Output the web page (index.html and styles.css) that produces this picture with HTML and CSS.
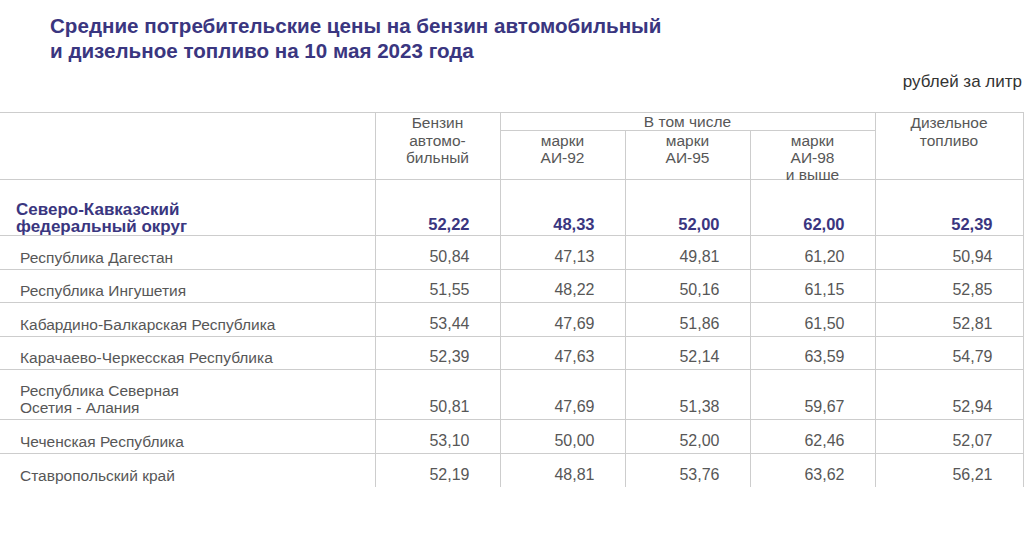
FILE: index.html
```html
<!DOCTYPE html>
<html lang="ru">
<head>
<meta charset="utf-8">
<link rel="stylesheet" href="styles.css">
</head>
<body>
<div class="page">
  <h1 class="title">Средние потребительские цены на бензин автомобильный<br>и дизельное топливо на 10 мая 2023 года</h1>
  <div class="unit">рублей за литр</div>
  <table class="prices">
    <colgroup>
      <col class="c-name"><col class="c-num"><col class="c-num"><col class="c-num"><col class="c-num"><col class="c-last">
    </colgroup>
    <thead>
      <tr class="h1">
        <th rowspan="2"></th>
        <th rowspan="2"><div class="hc">Бензин<br>автомо-<br>бильный</div></th>
        <th colspan="3" class="hsub"><div class="hs">В том числе</div></th>
        <th rowspan="2"><div class="hc">Дизельное<br>топливо</div></th>
      </tr>
      <tr class="h2">
        <th><div class="hc2">марки<br>АИ-92</div></th>
        <th><div class="hc2">марки<br>АИ-95</div></th>
        <th><div class="hc2">марки<br>АИ-98<br>и выше</div></th>
      </tr>
    </thead>
    <tbody>
      <tr class="total">
        <td class="name">Северо-Кавказский<br>федеральный округ</td>
        <td class="num">52,22</td><td class="num">48,33</td><td class="num">52,00</td><td class="num">62,00</td><td class="num">52,39</td>
      </tr>
      <tr class="row">
        <td class="name">Республика Дагестан</td>
        <td class="num">50,84</td><td class="num">47,13</td><td class="num">49,81</td><td class="num">61,20</td><td class="num">50,94</td>
      </tr>
      <tr class="row">
        <td class="name">Республика Ингушетия</td>
        <td class="num">51,55</td><td class="num">48,22</td><td class="num">50,16</td><td class="num">61,15</td><td class="num">52,85</td>
      </tr>
      <tr class="row">
        <td class="name">Кабардино-Балкарская Республика</td>
        <td class="num">53,44</td><td class="num">47,69</td><td class="num">51,86</td><td class="num">61,50</td><td class="num">52,81</td>
      </tr>
      <tr class="row">
        <td class="name">Карачаево-Черкесская Республика</td>
        <td class="num">52,39</td><td class="num">47,63</td><td class="num">52,14</td><td class="num">63,59</td><td class="num">54,79</td>
      </tr>
      <tr class="row tall">
        <td class="name">Республика Северная<br>Осетия - Алания</td>
        <td class="num">50,81</td><td class="num">47,69</td><td class="num">51,38</td><td class="num">59,67</td><td class="num">52,94</td>
      </tr>
      <tr class="row">
        <td class="name">Чеченская Республика</td>
        <td class="num">53,10</td><td class="num">50,00</td><td class="num">52,00</td><td class="num">62,46</td><td class="num">52,07</td>
      </tr>
      <tr class="row last">
        <td class="name">Ставропольский край</td>
        <td class="num">52,19</td><td class="num">48,81</td><td class="num">53,76</td><td class="num">63,62</td><td class="num">56,21</td>
      </tr>
    </tbody>
  </table>
</div>
</body>
</html>
```

FILE: styles.css
```css
html, body {
  margin: 0;
  padding: 0;
  background: #ffffff;
}
body {
  font-family: "Liberation Sans", Arial, sans-serif;
  width: 1024px;
  height: 547px;
  overflow: hidden;
}
.page {
  padding-top: 13px;
}
.title {
  margin: 0 0 0 50px;
  font-size: 20.6px;
  line-height: 25px;
  font-weight: bold;
  color: #3a3680;
}
.unit {
  text-align: right;
  padding-right: 2px;
  margin-top: 9px;
  font-size: 17px;
  line-height: 20px;
  color: #333333;
}
.prices {
  margin-top: 20px;
  width: 1023px;
  border-collapse: collapse;
  table-layout: fixed;
  color: #575757;
  font-size: 15.5px;
}
.c-name { width: 375px; }
.c-num { width: 125px; }
.c-last { width: 148px; }
.prices th, .prices td {
  border: 1px solid #cdcdcd;
  padding: 0;
}
.prices tr > :first-child {
  border-left: none;
}
.prices th {
  font-weight: normal;
  vertical-align: top;
  text-align: center;
  line-height: 17.5px;
}
.h1 { height: 18px; }
.h2 { height: 49px; }
.hc {
  height: 60px;
  padding-top: 1px;
}
.hs {
  height: 17px;
  line-height: 17px;
}
.hc2 {
  height: 46px;
  line-height: 17px;
  padding-top: 1px;
}
.prices td {
  vertical-align: bottom;
}
.name {
  padding-left: 20px !important;
  line-height: 17px;
}
.num {
  text-align: right;
  padding-right: 30px !important;
  font-size: 16px;
  line-height: 18px;
}
.row td { padding-bottom: 3px; }
.row { height: 33.5px; }
.row.tall { height: 50px; }
.total { height: 56px; }
.total td {
  color: #3a3680;
  font-weight: bold;
  font-size: 17px;
  padding-bottom: 2px;
}
.total .name {
  padding-left: 16px !important;
  padding-bottom: 0;
}
.total .num {
  font-size: 16.5px;
}
.last td { border-bottom: none; }
```
